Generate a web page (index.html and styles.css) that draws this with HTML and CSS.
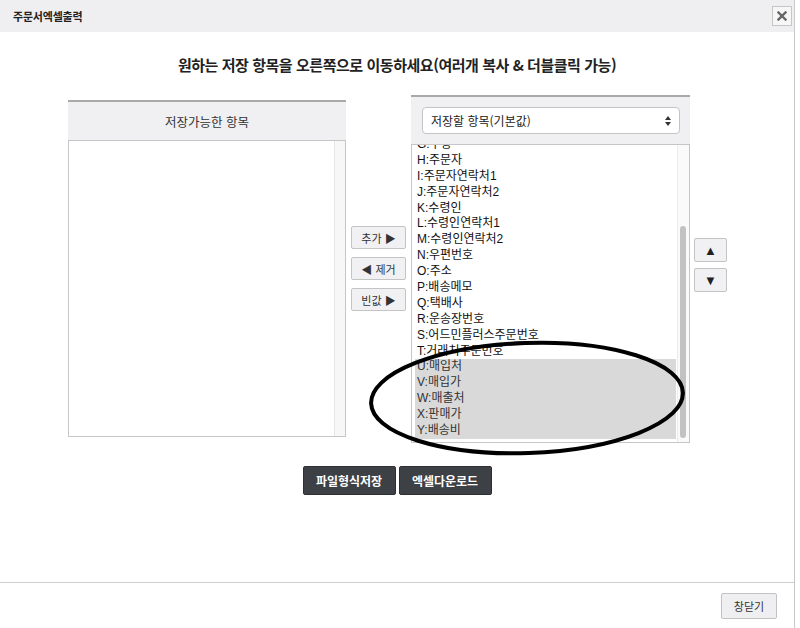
FILE: index.html
```html
<!DOCTYPE html>
<html lang="ko">
<head>
<meta charset="utf-8">
<title>주문서엑셀출력</title>
<link rel="stylesheet" href="styles.css">
</head>
<body>
<div class="window">
  <div class="titlebar">
    <span class="title">주문서엑셀출력</span>
    <button class="close" type="button" aria-label="닫기">
      <svg width="10" height="10" viewBox="0 0 10 10"><path d="M1.5 1.5 L8.5 8.5 M8.5 1.5 L1.5 8.5" stroke="#666" stroke-width="2.4" stroke-linecap="square"/></svg>
    </button>
  </div>
  <h1 class="heading">원하는 저장 항목을 오른쪽으로 이동하세요(여러개 복사 &amp; 더블클릭 가능)</h1>
  <div class="panels">
    <div class="panel panel-left">
      <div class="panel-head">저장가능한 항목</div>
      <div class="listbox listbox-left"><div class="track"></div></div>
    </div>
    <div class="movebtns">
      <button class="gbtn" type="button">추가 ▶</button>
      <button class="gbtn" type="button">◀ 제거</button>
      <button class="gbtn" type="button">빈값 ▶</button>
    </div>
    <div class="panel panel-right">
      <div class="panel-head head-select">
        <div class="select">
          <span>저장할 항목(기본값)</span>
          <svg width="8" height="12" viewBox="0 0 8 12"><path d="M4 1 L7 5 L1 5 Z M4 11 L7 7 L1 7 Z" fill="#333"/></svg>
        </div>
      </div>
      <div class="listbox listbox-right">
        <ul class="items">
          <li>G:수량</li>
          <li>H:주문자</li>
          <li>I:주문자연락처1</li>
          <li>J:주문자연락처2</li>
          <li>K:수령인</li>
          <li>L:수령인연락처1</li>
          <li>M:수령인연락처2</li>
          <li>N:우편번호</li>
          <li>O:주소</li>
          <li>P:배송메모</li>
          <li>Q:택배사</li>
          <li>R:운송장번호</li>
          <li>S:어드민플러스주문번호</li>
          <li>T:거래처주문번호</li>
          <li class="sel">U:매입처</li>
          <li class="sel">V:매입가</li>
          <li class="sel">W:매출처</li>
          <li class="sel">X:판매가</li>
          <li class="sel">Y:배송비</li>
        </ul>
        <div class="track track-right"><div class="thumb"></div></div>
      </div>
    </div>
    <div class="orderbtns">
      <button class="gbtn sq" type="button">▲</button>
      <button class="gbtn sq" type="button">▼</button>
    </div>
  </div>
  <div class="actions">
    <button class="dbtn" type="button">파일형식저장</button>
    <button class="dbtn" type="button">엑셀다운로드</button>
  </div>
  <div class="footer">
    <button class="closebtn" type="button">창닫기</button>
  </div>
  <svg class="mark" width="800" height="628" viewBox="0 0 800 628">
    <ellipse cx="527" cy="398" rx="156" ry="55" transform="rotate(-2 527 398)" fill="none" stroke="#000" stroke-width="4"/>
  </svg>
</div>
</body>
</html>
```

FILE: styles.css
```css
html, body {
  margin: 0;
  padding: 0;
  background: #fff;
}
body {
  font-family: "Liberation Sans", "Noto Sans CJK KR", sans-serif;
  color: #222;
}
button {
  font-family: inherit;
  cursor: pointer;
}
.window {
  position: relative;
  width: 794px;
  height: 628px;
  border-right: 1px solid #c8c8c8;
  display: flex;
  flex-direction: column;
  overflow: hidden;
}
.titlebar {
  height: 32px;
  background: #efeff1;
  display: flex;
  align-items: center;
  justify-content: space-between;
  padding: 0 2px 0 13px;
}
.title {
  font-family: "Noto Sans CJK KR", sans-serif;
  font-size: 11px;
  font-weight: bold;
  color: #222;
  letter-spacing: -0.2px;
}
.close {
  width: 20px;
  height: 20px;
  padding: 0;
  border: 1px solid #c6c6c6;
  background: #f6f6f6;
  display: flex;
  align-items: center;
  justify-content: center;
}
.heading {
  margin: 23px 0 0;
  height: 20px;
  line-height: 20px;
  text-align: center;
  font-family: "Noto Sans CJK KR", sans-serif;
  font-size: 15px;
  font-weight: bold;
  color: #222;
  letter-spacing: -0.45px;
}
.panels {
  display: flex;
  align-items: flex-start;
  margin-top: 20px;
  padding-left: 68px;
}
.panel {
  display: flex;
  flex-direction: column;
  border-top: 2px solid #a9a9a9;
}
.panel-left {
  width: 278px;
  margin-top: 5px;
}
.panel-right {
  width: 279px;
  margin-left: 5px;
}
.panel-head {
  height: 38px;
  background: #f0f0f2;
  display: flex;
  align-items: center;
  justify-content: center;
  font-family: "Noto Sans CJK KR", sans-serif;
  font-size: 12.5px;
  color: #333;
}
.head-select {
  height: 47px;
  padding: 0 10px 0 11px;
  justify-content: stretch;
}
.select {
  flex: 1;
  height: 25px;
  background: #fff;
  border: 1px solid #c4c4c4;
  border-radius: 4px;
  display: flex;
  align-items: center;
  justify-content: space-between;
  padding: 0 7px 0 8px;
  font-size: 12px;
  color: #222;
}
.listbox {
  position: relative;
  border: 1px solid #c6c6c6;
  background: #fff;
  box-sizing: border-box;
  overflow: hidden;
}
.listbox-left {
  height: 297px;
}
.listbox-right {
  height: 299px;
  display: flex;
}
.track {
  position: absolute;
  top: 0;
  right: 0;
  bottom: 0;
  width: 10px;
  background: #f7f7f7;
  border-left: 1px solid #e6e6e6;
}
.track-right {
  width: 11px;
  border-left: 1px solid #ececec;
  background: #fafafa;
}
.thumb {
  position: absolute;
  left: 2px;
  top: 81px;
  width: 6px;
  height: 212px;
  border-radius: 3px;
  background: #c2c2c2;
}
.items {
  list-style: none;
  margin: -8px 0 0 3px;
  padding: 0;
  width: 261px;
  font-size: 12px;
  color: #111;
}
.items li {
  height: 15.9px;
  line-height: 15.9px;
  padding-left: 2px;
  white-space: nowrap;
}
.items li.sel {
  background: #d9d9d9;
  color: #333;
}
.movebtns {
  display: flex;
  flex-direction: column;
  gap: 8px;
  margin: 131px 0 0 5px;
}
.gbtn {
  width: 55px;
  height: 23px;
  padding: 0;
  border: 1px solid #c4c4c4;
  border-radius: 2px;
  background: #f1f1f3;
  font-size: 11px;
  color: #333;
}
.orderbtns {
  display: flex;
  flex-direction: column;
  gap: 6px;
  margin: 143px 0 0 4px;
}
.gbtn.sq {
  width: 33px;
  height: 24px;
  font-size: 13px;
  color: #222;
}
.actions {
  display: flex;
  justify-content: center;
  gap: 3px;
  margin-top: 23px;
}
.dbtn {
  width: 93px;
  height: 29px;
  padding: 0;
  border: 1px solid #2d2f33;
  border-radius: 2px;
  background: #3d4045;
  color: #fff;
  font-family: "Noto Sans CJK KR", sans-serif;
  font-size: 12px;
  font-weight: bold;
}
.footer {
  margin-top: 87px;
  border-top: 1px solid #cfcfcf;
  display: flex;
  justify-content: flex-end;
  padding: 10px 17px 0 0;
}
.closebtn {
  width: 56px;
  height: 26px;
  padding: 0;
  border: 1px solid #c2c2c2;
  border-radius: 2px;
  background: #efeff1;
  font-family: "Noto Sans CJK KR", sans-serif;
  font-size: 11px;
  color: #333;
}
.mark {
  position: absolute;
  left: 0;
  top: 0;
  pointer-events: none;
}
```
